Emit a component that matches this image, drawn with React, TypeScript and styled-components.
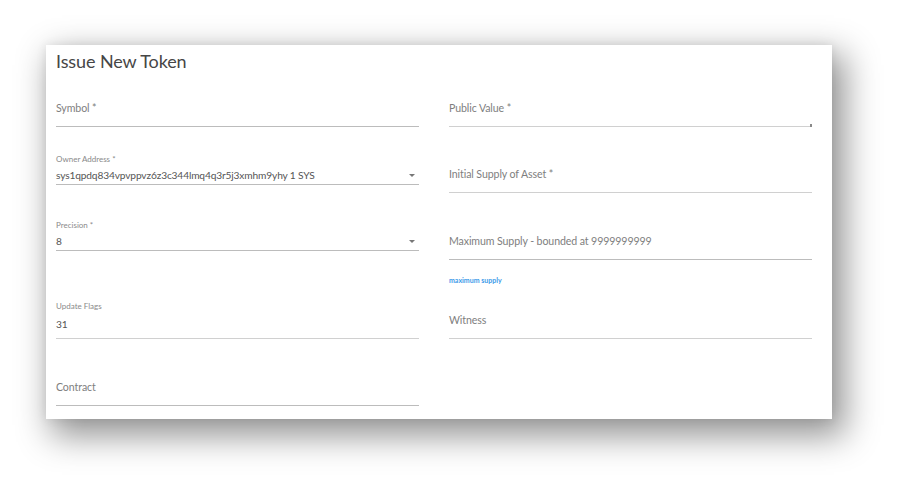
import React from "react";
import styled, { createGlobalStyle } from "styled-components";

const GlobalStyle = createGlobalStyle`
  html, body { margin: 0; padding: 0; background: #ffffff; }
  body { font-family: Lato, "Open Sans", sans-serif; }
`;

const Page = styled.div`
  width: 899px;
  height: 487px;
  padding: 45px 0 0 46px;
  box-sizing: border-box;
`;

const Card = styled.div`
  width: 786px;
  height: 374px;
  box-sizing: border-box;
  background: #fff;
  padding: 5px 20px 0 10px;
  box-shadow: 9px 13px 32px 4px rgba(0, 0, 0, 0.42), 0 0 10px rgba(0, 0, 0, 0.08);
`;

const Title = styled.h2`
  margin: 0;
  font-size: 18px;
  line-height: 22px;
  font-weight: 400;
  color: #464646;
  letter-spacing: -0.1px;
`;

const Columns = styled.div`
  display: grid;
  grid-template-columns: 363px 363px;
  column-gap: 30px;
  margin-top: 28px;
`;

const Column = styled.div`
  display: flex;
  flex-direction: column;
`;

const Field = styled.div<{ $mt: number; $soft?: boolean }>`
  position: relative;
  margin-top: ${(p) => p.$mt}px;
  display: flex;
  flex-direction: column;
  border-bottom: 1px solid ${(p) => (p.$soft ? "#d0d0d0" : "#bcbcbc")};
`;

const EmptyLabel = styled.div`
  font-size: 10.6px;
  line-height: 16px;
  letter-spacing: -0.1px;
  color: #7e7e7e;
  padding-bottom: 10px;
`;

const SmallLabel = styled.div<{ $gap: number }>`
  font-size: 8px;
  line-height: 11px;
  color: #8a8a8a;
  margin-bottom: ${(p) => p.$gap}px;
`;

const ValueRow = styled.div<{ $pb: number }>`
  display: flex;
  align-items: center;
  justify-content: space-between;
  font-size: 10.2px;
  line-height: 14px;
  letter-spacing: -0.15px;
  color: #555;
  padding: 0 4px ${(p) => p.$pb}px 0;
`;

const Arrow = styled.span`
  width: 0;
  height: 0;
  border-left: 3.5px solid transparent;
  border-right: 3.5px solid transparent;
  border-top: 3.5px solid #777;
`;

const Grip = styled.span`
  position: absolute;
  right: 0;
  bottom: -1px;
  width: 2px;
  height: 3px;
  background: #8a8a8a;
`;

const Helper = styled.div<{ $mt: number }>`
  margin-top: ${(p) => p.$mt}px;
  font-size: 7px;
  line-height: 10px;
  font-weight: 700;
  color: #3d9be9;
`;

export default function App() {
  return (
    <>
      <GlobalStyle />
      <Page>
        <Card>
          <Title>Issue New Token</Title>
          <Columns>
            <Column>
              <Field $mt={0}>
                <EmptyLabel>Symbol *</EmptyLabel>
              </Field>
              <Field $mt={27}>
                <SmallLabel $gap={3}>Owner Address *</SmallLabel>
                <ValueRow $pb={2}>
                  <span>sys1qpdq834vpvppvz6z3c344lmq4q3r5j3xmhm9yhy 1 SYS</span>
                  <Arrow />
                </ValueRow>
              </Field>
              <Field $mt={35}>
                <SmallLabel $gap={3}>Precision *</SmallLabel>
                <ValueRow $pb={2}>
                  <span>8</span>
                  <Arrow />
                </ValueRow>
              </Field>
              <Field $mt={50} $soft>
                <SmallLabel $gap={5}>Update Flags</SmallLabel>
                <ValueRow $pb={7}>
                  <span>31</span>
                </ValueRow>
              </Field>
              <Field $mt={40}>
                <EmptyLabel>Contract</EmptyLabel>
              </Field>
            </Column>
            <Column>
              <Field $mt={0} $soft>
                <EmptyLabel>Public Value *</EmptyLabel>
                <Grip />
              </Field>
              <Field $mt={39} $soft>
                <EmptyLabel>Initial Supply of Asset *</EmptyLabel>
              </Field>
              <Field $mt={40}>
                <EmptyLabel>Maximum Supply - bounded at 9999999999</EmptyLabel>
              </Field>
              <Helper $mt={15}>maximum supply</Helper>
              <Field $mt={27} $soft>
                <EmptyLabel>Witness</EmptyLabel>
              </Field>
            </Column>
          </Columns>
        </Card>
      </Page>
    </>
  );
}
